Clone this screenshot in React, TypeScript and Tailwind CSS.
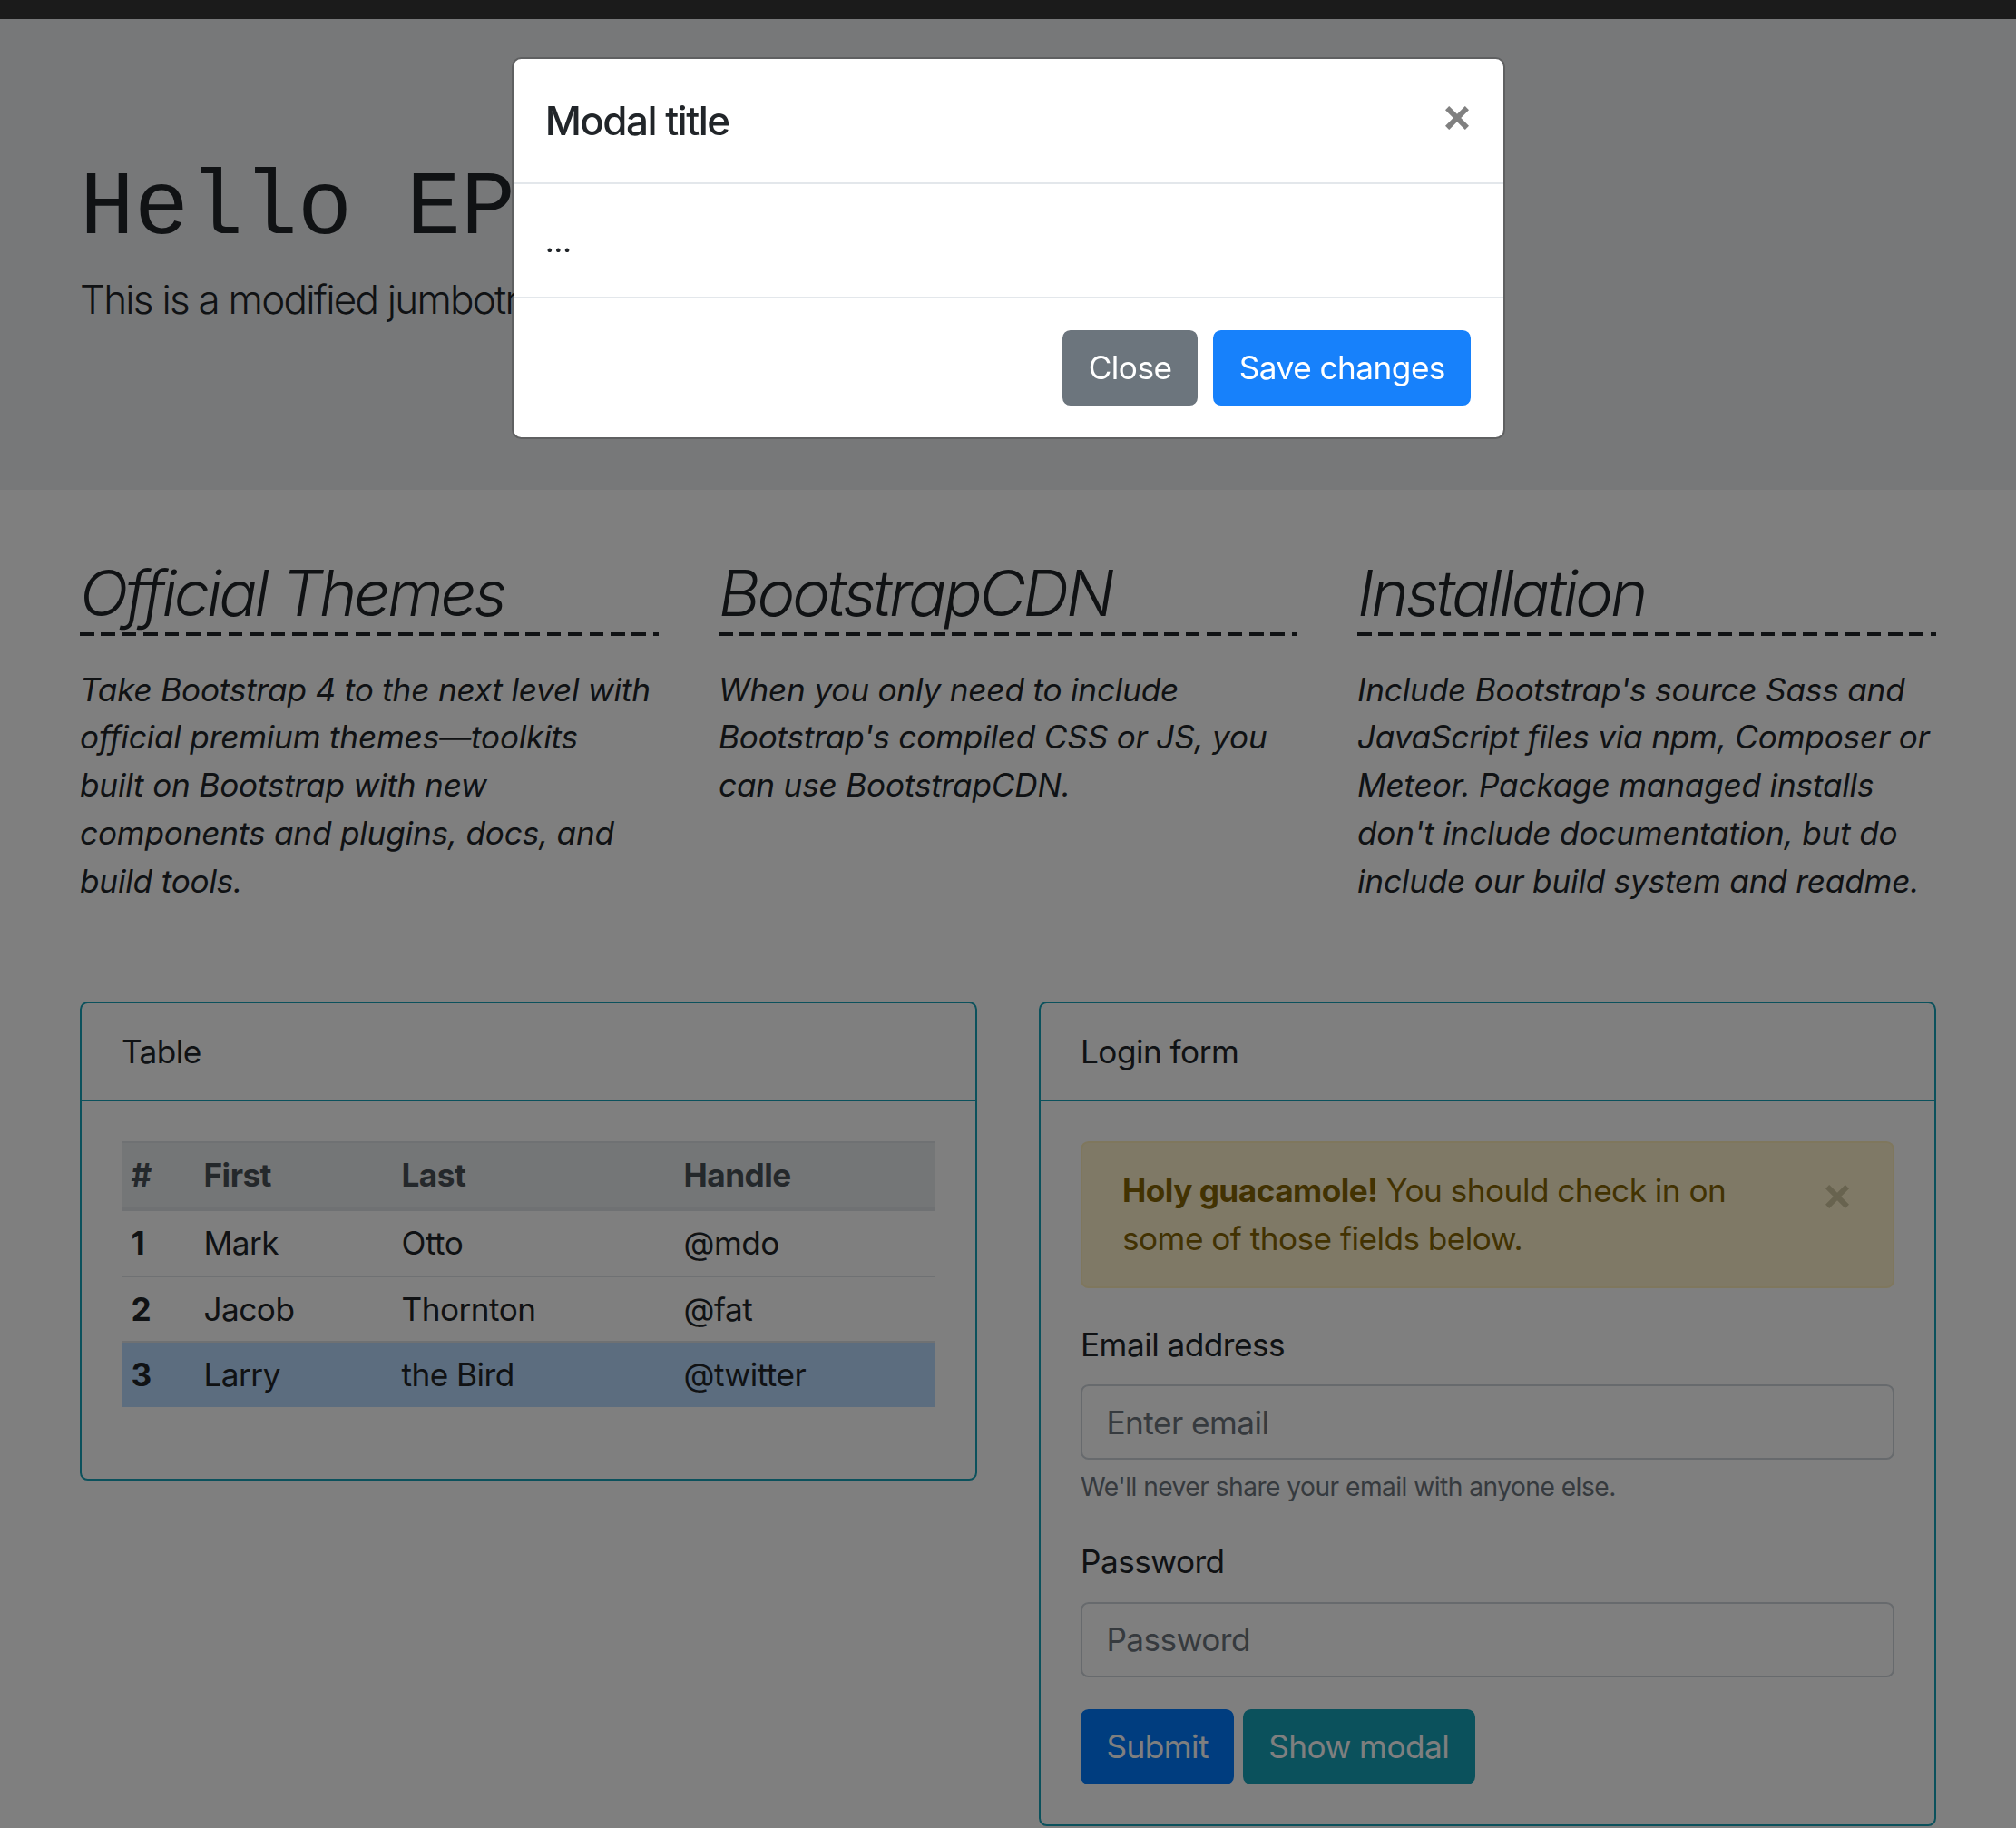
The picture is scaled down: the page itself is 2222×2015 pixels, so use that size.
import React from "react";

const columns = [
  {
    title: "Official Themes",
    lines: [
      "Take Bootstrap 4 to the next level with",
      "official premium themes—toolkits",
      "built on Bootstrap with new",
      "components and plugins, docs, and",
      "build tools.",
    ],
  },
  {
    title: "BootstrapCDN",
    lines: [
      "When you only need to include",
      "Bootstrap's compiled CSS or JS, you",
      "can use BootstrapCDN.",
    ],
  },
  {
    title: "Installation",
    lines: [
      "Include Bootstrap's source Sass and",
      "JavaScript files via npm, Composer or",
      "Meteor. Package managed installs",
      "don't include documentation, but do",
      "include our build system and readme.",
    ],
  },
];

const people = [
  { id: 1, first: "Mark", last: "Otto", handle: "@mdo" },
  { id: 2, first: "Jacob", last: "Thornton", handle: "@fat" },
  { id: 3, first: "Larry", last: "the Bird", handle: "@twitter" },
];

const CloseIcon = ({ className }: { className?: string }) => (
  <svg viewBox="0 0 26 26" className={className} fill="none" stroke="currentColor" strokeWidth={6}>
    <line x1="2.1" y1="2.1" x2="23.9" y2="23.9" />
    <line x1="23.9" y1="2.1" x2="2.1" y2="23.9" />
  </svg>
);

const Card = ({ title, children }: { title: string; children: React.ReactNode }) => (
  <div className="rounded-[8.8px] border-2 border-[#17a2b8]">
    <div className="border-b-2 border-[#17a2b8] px-[44px] py-[26.4px]">{title}</div>
    <div className="p-[44px]">{children}</div>
  </div>
);

export default function App() {
  return (
    <div className="relative min-h-screen bg-white font-['Inter','Noto_Sans',sans-serif] text-[35.2px] leading-[52.8px] tracking-[-0.015em] text-[#212529]">
      <div className="h-[21px] bg-[#363636]" />

      {/* jumbotron */}
      <div className="h-[519px] bg-[#eef0f3] px-[88px] pt-[150px]">
        <h1 className="whitespace-nowrap font-['Liberation_Mono',monospace] text-[100px] leading-[120px] font-normal tracking-normal">
          Hello EPAM
        </h1>
        <p className="mt-[6px] whitespace-nowrap text-[44px] leading-[66px] font-light tracking-[-0.04em]">
          This is a modified jumbotron that occupies the full width.
        </p>
      </div>

      <div className="px-[88px]">
        <div className="grid grid-cols-3 gap-x-[66px] pt-[72px]">
          {columns.map((col) => (
            <div key={col.title}>
              <h2 className="text-[70.4px] leading-[84.5px] font-light italic tracking-[-0.045em]">{col.title}</h2>
              <div className="h-[4px] bg-[repeating-linear-gradient(90deg,#212529_0_15.6px,transparent_15.6px_23.4px)]" />
              <p className="mt-[33px] italic tracking-[-0.006em]">
                {col.lines.map((line) => (
                  <span key={line} className="block whitespace-nowrap">
                    {line}
                  </span>
                ))}
              </p>
            </div>
          ))}
        </div>

        <div className="mt-[107px] grid grid-cols-2 items-start gap-x-[68px]">
          <Card title="Table">
            <table className="w-full table-fixed text-left">
              <thead className="bg-[#e9ecef] text-[#495057]">
                <tr>
                  <th className="w-[80px] border-t-2 border-b-4 border-[#dee2e6] px-[10.5px] py-[9px] font-bold">#</th>
                  <th className="w-[218px] border-t-2 border-b-4 border-[#dee2e6] px-[10.5px] py-[9px] font-bold">First</th>
                  <th className="w-[311px] border-t-2 border-b-4 border-[#dee2e6] px-[10.5px] py-[9px] font-bold">Last</th>
                  <th className="border-t-2 border-b-4 border-[#dee2e6] px-[10.5px] py-[9px] font-bold">Handle</th>
                </tr>
              </thead>
              <tbody>
                {people.map((p) => (
                  <tr key={p.id} className={p.id === 3 ? "bg-[#b8daff]" : ""}>
                    <th className="border-t-2 border-[#dee2e6] px-[10.5px] py-[9px] font-bold">{p.id}</th>
                    <td className="border-t-2 border-[#dee2e6] px-[10.5px] py-[9px]">{p.first}</td>
                    <td className="border-t-2 border-[#dee2e6] px-[10.5px] py-[9px]">{p.last}</td>
                    <td className="border-t-2 border-[#dee2e6] px-[10.5px] py-[9px]">{p.handle}</td>
                  </tr>
                ))}
              </tbody>
            </table>
            <div className="h-[35.2px]" />
          </Card>

          <Card title="Login form">
            <div className="relative mb-[35.2px] rounded-[8.8px] border-2 border-[#ffeeba] bg-[#fff3cd] py-[26.4px] pl-[44px] pr-[140.8px] text-[#856404]">
              <span className="block whitespace-nowrap">
                <strong className="font-bold">Holy guacamole!</strong> You should check in on
              </span>
              <span className="block whitespace-nowrap">some of those fields below.</span>
              <CloseIcon className="absolute right-[48px] top-[46px] h-[26px] w-[26px] text-[#d0c69e]" />
            </div>

            <div className="mb-[35.2px]">
              <label className="mb-[17.6px] block">Email address</label>
              <input
                type="email"
                placeholder="Enter email"
                className="block h-[83px] w-full rounded-[8.8px] border-2 border-[#ced4da] bg-white px-[26.4px] text-[35.2px] placeholder:text-[#6c757d]"
              />
              <small className="mt-[8.8px] block text-[28.16px] leading-[42.24px] text-[#6c757d]">
                We'll never share your email with anyone else.
              </small>
            </div>

            <div className="mb-[35.2px]">
              <label className="mb-[17.6px] block">Password</label>
              <input
                type="password"
                placeholder="Password"
                className="block h-[83px] w-full rounded-[8.8px] border-2 border-[#ced4da] bg-white px-[26.4px] text-[35.2px] placeholder:text-[#6c757d]"
              />
            </div>

            <div className="flex gap-[9.4px]">
              <button className="rounded-[8.8px] border-2 border-[#007bff] bg-[#007bff] px-[26.4px] py-[13.2px] text-white">
                Submit
              </button>
              <button className="rounded-[8.8px] border-2 border-[#17a2b8] bg-[#17a2b8] px-[26.4px] py-[13.2px] text-white">
                Show modal
              </button>
            </div>
          </Card>
        </div>
      </div>

      {/* modal backdrop */}
      <div className="fixed inset-0 bg-black/50" />

      <div className="fixed inset-0 flex items-start justify-center pt-[63px]">
        <div className="w-[1095px] rounded-[10.5px] border-2 border-black/20 bg-white bg-clip-padding">
          <div className="flex items-start justify-between border-b-2 border-[#e3e7eb] p-[35.2px]">
            <h5 className="text-[44px] leading-[66px] font-medium tracking-[-0.035em]">Modal title</h5>
            <CloseIcon className="mr-[2px] mt-[17px] h-[26px] w-[26px] text-[#808080]" />
          </div>
          <div className="p-[35.2px]">
            <p>...</p>
          </div>
          <div className="flex items-center justify-end gap-[17.6px] border-t-2 border-[#e3e7eb] px-[35.2px] py-[35.2px]">
            <button className="rounded-[8.8px] border-2 border-[#6c757d] bg-[#6c757d] px-[26.4px] py-[13.2px] text-white">
              Close
            </button>
            <button className="rounded-[8.8px] border-2 border-[#1781fb] bg-[#1781fb] px-[26.4px] py-[13.2px] text-white">
              Save changes
            </button>
          </div>
        </div>
      </div>
    </div>
  );
}
